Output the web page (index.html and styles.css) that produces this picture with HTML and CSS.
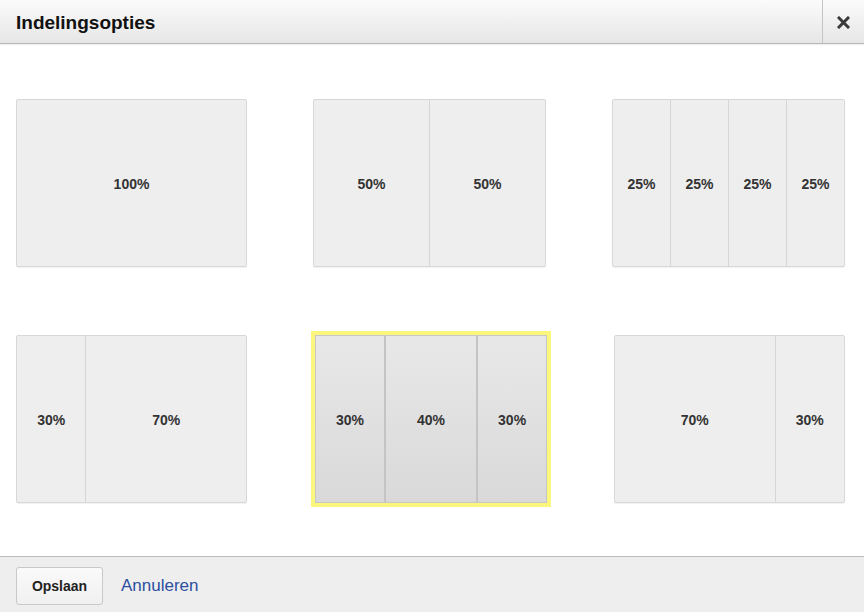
FILE: index.html
```html
<!DOCTYPE html>
<html lang="nl">
<head>
    <meta charset="UTF-8">
    <meta name="viewport" content="width=device-width, initial-scale=1.0">
    <title>Indelingsopties</title>
    <link rel="stylesheet" href="styles.css">
</head>
<body>
    <div class="dialog">
        <div class="header">
            <h2 class="title">Indelingsopties</h2>
            <div class="close">
                <svg width="13" height="13" viewBox="0 0 13 13">
                    <path d="M2 2 L11 11 M11 2 L2 11" stroke="#3a3a3a" stroke-width="3" stroke-linecap="square"/>
                </svg>
            </div>
        </div>

        <!-- Layout choices -->
        <div class="options">
            <div class="layout">
                <div class="col">100%</div>
            </div>
            <div class="layout">
                <div class="col">50%</div>
                <div class="col">50%</div>
            </div>
            <div class="layout">
                <div class="col">25%</div>
                <div class="col">25%</div>
                <div class="col">25%</div>
                <div class="col">25%</div>
            </div>
            <div class="layout">
                <div class="col" style="flex: 3;">30%</div>
                <div class="col" style="flex: 7;">70%</div>
            </div>
            <div class="layout selected">
                <div class="col" style="flex: 3;">30%</div>
                <div class="col" style="flex: 4;">40%</div>
                <div class="col" style="flex: 3;">30%</div>
            </div>
            <div class="layout shifted">
                <div class="col" style="flex: 7;">70%</div>
                <div class="col" style="flex: 3;">30%</div>
            </div>
        </div>

        <div class="footer">
            <button class="save">Opslaan</button>
            <a class="cancel" href="#">Annuleren</a>
        </div>
    </div>
</body>
</html>
```

FILE: styles.css
```css
body {
    margin: 0;
    font-family: "Liberation Sans", Arial, sans-serif;
    background: white;
}
.dialog {
    width: 864px;
    height: 612px;
    display: flex;
    flex-direction: column;
}
.header {
    height: 43px;
    display: flex;
    align-items: stretch;
    background: linear-gradient(#fbfbfb, #e6e6e6);
    border-bottom: 1px solid #b8b8b8;
    box-shadow: 0 1px 1px rgba(0, 0, 0, 0.06);
}
.title {
    flex: 1;
    margin: 0;
    padding-left: 16px;
    font-size: 19px;
    line-height: 45px;
    color: #111;
}
.close {
    width: 41px;
    border-left: 1px solid #c4c4c4;
    display: flex;
    align-items: center;
    justify-content: center;
    padding-top: 1px;
}
.options {
    flex: 1;
    display: grid;
    grid-template-columns: 231px 233px 233px;
    grid-auto-rows: 168px;
    column-gap: 66px;
    row-gap: 68px;
    padding: 55px 0 0 16px;
}
.layout {
    display: flex;
    background: #eee;
    border: 1px solid #d8d8d8;
    border-radius: 2px;
    box-shadow: 0 1px 1px rgba(0, 0, 0, 0.06);
}
.col {
    flex: 1;
    display: flex;
    align-items: center;
    justify-content: center;
    padding-top: 1px;
    font-size: 14px;
    font-weight: bold;
    color: #333;
}
.col + .col {
    border-left: 1px solid #d6d6d6;
}
.selected {
    margin-left: 2px;
    margin-right: -1px;
    background: linear-gradient(#e8e8e8, #d9d9d9);
    border-color: #c6c6c6;
    border-radius: 0;
    outline: 4px solid #fbf67c;
}
.selected .col + .col {
    border-left: 2px solid #c4c4c4;
}
.shifted {
    margin-left: 2px;
}
.footer {
    height: 55px;
    display: flex;
    align-items: center;
    gap: 18px;
    padding-left: 16px;
    background: #eee;
    border-top: 1px solid #bdbdbd;
}
.save {
    width: 87px;
    height: 38px;
    margin-top: 3px;
    background: linear-gradient(#fafafa, #f0f0f0);
    border: 1px solid #c8c8c8;
    border-radius: 3px;
    font-family: inherit;
    font-size: 14px;
    font-weight: bold;
    color: #222;
}
.cancel {
    padding-top: 2px;
    font-size: 17px;
    color: #2b50a0;
    text-decoration: none;
}
```
